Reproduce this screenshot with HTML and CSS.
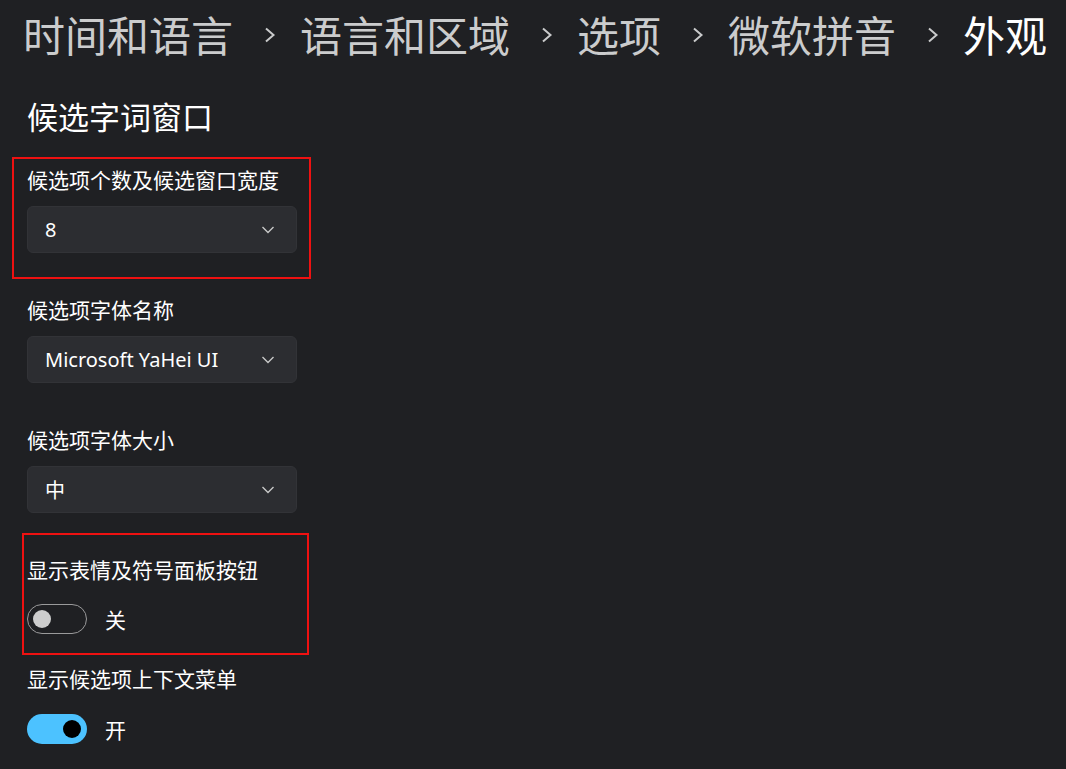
FILE: index.html
```html
<!DOCTYPE html>
<html lang="zh-CN">
<head>
  <meta charset="UTF-8">
  <title>外观</title>
  <link rel="stylesheet" href="styles.css">
</head>
<body>
  <div class="breadcrumb">
    <span class="crumb">时间和语言</span>
    <svg class="sep" width="12" height="16" viewBox="0 0 12 16"><path d="M2 1.5 L9.5 8 L2 14.5" fill="none" stroke="#c9cacb" stroke-width="2"/></svg>
    <span class="crumb">语言和区域</span>
    <svg class="sep" width="12" height="16" viewBox="0 0 12 16"><path d="M2 1.5 L9.5 8 L2 14.5" fill="none" stroke="#c9cacb" stroke-width="2"/></svg>
    <span class="crumb">选项</span>
    <svg class="sep" width="12" height="16" viewBox="0 0 12 16"><path d="M2 1.5 L9.5 8 L2 14.5" fill="none" stroke="#c9cacb" stroke-width="2"/></svg>
    <span class="crumb">微软拼音</span>
    <svg class="sep" width="12" height="16" viewBox="0 0 12 16"><path d="M2 1.5 L9.5 8 L2 14.5" fill="none" stroke="#c9cacb" stroke-width="2"/></svg>
    <span class="crumb current">外观</span>
  </div>

  <div class="content">
    <h2 class="sectionTitle">候选字词窗口</h2>

    <div class="setting">
      <div class="label">候选项个数及候选窗口宽度</div>
      <div class="combo">
        <span>8</span>
        <svg width="14" height="8" viewBox="0 0 14 8"><path d="M1.5 1 L7 6.5 L12.5 1" fill="none" stroke="#c8c8c8" stroke-width="1.4"/></svg>
      </div>
    </div>

    <div class="setting">
      <div class="label">候选项字体名称</div>
      <div class="combo">
        <span>Microsoft YaHei UI</span>
        <svg width="14" height="8" viewBox="0 0 14 8"><path d="M1.5 1 L7 6.5 L12.5 1" fill="none" stroke="#c8c8c8" stroke-width="1.4"/></svg>
      </div>
    </div>

    <div class="setting">
      <div class="label">候选项字体大小</div>
      <div class="combo">
        <span>中</span>
        <svg width="14" height="8" viewBox="0 0 14 8"><path d="M1.5 1 L7 6.5 L12.5 1" fill="none" stroke="#c8c8c8" stroke-width="1.4"/></svg>
      </div>
    </div>

    <div class="setting toggleSetting">
      <div class="label">显示表情及符号面板按钮</div>
      <div class="toggleRow">
        <div class="toggle off"><div class="knob"></div></div>
        <span>关</span>
      </div>
    </div>

    <div class="setting toggleSetting last">
      <div class="label">显示候选项上下文菜单</div>
      <div class="toggleRow">
        <div class="toggle on"><div class="knob"></div></div>
        <span>开</span>
      </div>
    </div>
  </div>

  <div class="mark markFirst"></div>
  <div class="mark markSecond"></div>
</body>
</html>
```

FILE: styles.css
```css
body {
  margin: 0;
  padding: 0;
  background: #1f2023;
  color: #ffffff;
  font-family: "Noto Sans", "Noto Sans CJK SC", sans-serif;
  position: relative;
  height: 769px;
  overflow: hidden;
}

.breadcrumb {
  display: flex;
  align-items: center;
  padding: 6px 0 0 23px;
  height: 56px;
  font-size: 42px;
  line-height: 56px;
  color: #cbcccd;
  white-space: nowrap;
}

.crumb {
  font-family: "Noto Sans CJK SC", sans-serif;
}

.crumb.current {
  color: #ffffff;
}

.sep {
  margin: 2px 24px 0 31px;
  flex-shrink: 0;
}

.content {
  padding-left: 27px;
}

.sectionTitle {
  margin: 34px 0 0 0;
  font-size: 31px;
  line-height: 40px;
  font-weight: 400;
  font-family: "Noto Sans CJK SC", sans-serif;
}

.setting {
  margin-top: 29px;
}

.setting + .setting {
  margin-top: 42px;
}

.label {
  font-size: 21px;
  line-height: 28px;
  font-family: "Noto Sans CJK SC", sans-serif;
}

.combo {
  margin-top: 13px;
  box-sizing: border-box;
  width: 270px;
  height: 47px;
  background: #2c2d31;
  border: 1px solid #323337;
  border-radius: 6px;
  display: flex;
  align-items: center;
  justify-content: space-between;
  padding: 0 21px 0 17px;
  font-size: 20px;
}

.toggleRow {
  margin-top: 21px;
  display: flex;
  align-items: center;
  gap: 18px;
  font-size: 21px;
  height: 30px;
}

.setting.last {
  margin-top: 30px;
}

.setting.last .toggleRow {
  margin-top: 22px;
}

.toggle {
  width: 60px;
  height: 30px;
  box-sizing: border-box;
  border-radius: 15px;
  display: flex;
  align-items: center;
}

.toggle.off {
  border: 1.5px solid #9a9a9b;
  padding-left: 5px;
}

.toggle.off .knob {
  background: #cdcdcd;
}

.toggle.on {
  background: #4cc2ff;
  justify-content: flex-end;
  padding-right: 6px;
}

.toggle.on .knob {
  background: #000000;
}

.knob {
  width: 18px;
  height: 18px;
  border-radius: 50%;
}

.mark {
  position: absolute;
  border: 2px solid #ee1111;
  box-sizing: border-box;
}

.markFirst {
  left: 12px;
  top: 157px;
  width: 299px;
  height: 122px;
}

.markSecond {
  left: 22px;
  top: 533px;
  width: 287px;
  height: 122px;
}
```
